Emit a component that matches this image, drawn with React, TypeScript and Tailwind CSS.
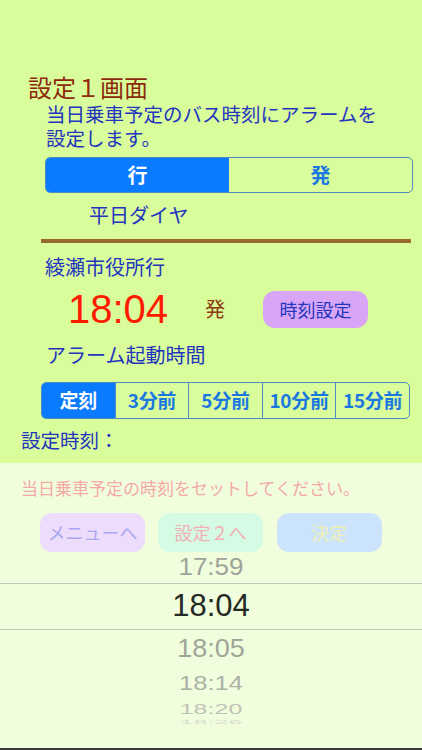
import React from 'react';

// 設定１画面 — alarm setup screen for a bus departure time.

const jp = "font-['Noto_Sans_CJK_JP',sans-serif]";
const num = "font-['Liberation_Sans','Noto_Sans_CJK_JP',sans-serif]";

const offsets = ['定刻', '3分前', '5分前', '10分前', '15分前'];

export default function App() {
  return (
    <div className={`flex h-[750px] w-[422px] flex-col overflow-hidden ${jp}`}>
      <div className="h-[463px] bg-[#dafd9b] pt-[71px]">
        <h1 className="ml-[28px] text-[24px] leading-[31px] text-[#8d2a0b]">設定１画面</h1>
        <p className={`ml-[46px] mt-[1px] flex flex-col text-[19.5px] leading-[24px] text-[#2435bd] ${num}`}>
          <span>当日乗車予定のバス時刻にアラームを</span>
          <span>設定します。</span>
        </p>

        <div className="ml-[45px] mt-[6px] flex h-[36px] w-[368px] overflow-hidden rounded-[5px] border border-[#4d8fc4]">
          <div className="flex flex-1 items-center justify-center bg-[#0a7aff] text-[20px] font-bold text-white">行</div>
          <div className="flex flex-1 items-center justify-center text-[20px] font-bold text-[#1c78e0]">発</div>
        </div>

        <p className="ml-[89px] mt-[10px] text-[20px] leading-[24px] text-[#2435bd]">平日ダイヤ</p>
        <div className="ml-[41px] mt-[12px] h-[4px] w-[370px] bg-[#9b6a30]" />

        <p className="ml-[45px] mt-[12px] text-[20px] leading-[24px] text-[#2435bd]">綾瀬市役所行</p>

        <div className="mt-[12px] flex h-[36px] items-center">
          <span className={`ml-[68px] w-[137px] text-[40px] leading-none text-[#ff1a00] ${num}`}>18:04</span>
          <span className="w-[58px] text-[20px] text-[#8b3a10]">発</span>
          <button className="flex h-[37px] w-[105px] items-center justify-center rounded-[12px] bg-[#d9a6f7] text-[18px] text-[#2435bd]">
            時刻設定
          </button>
        </div>

        <p className="ml-[46px] mt-[16px] text-[20px] leading-[24px] text-[#2435bd]">アラーム起動時間</p>

        <div className="ml-[41px] mt-[15px] flex h-[37px] w-[369px] overflow-hidden rounded-[5px] border border-[#4d8fc4]">
          {offsets.map((label, i) => (
            <div
              key={label}
              className={
                i === 0
                  ? 'flex flex-1 items-center justify-center bg-[#0a7aff] text-[19px] font-bold tracking-[-0.3px] text-white'
                  : 'flex flex-1 items-center justify-center border-l border-[#4d8fc4] text-[19px] font-bold tracking-[-0.3px] text-[#1c78e0]'
              }
            >
              {label}
            </div>
          ))}
        </div>

        <p className="ml-[21px] mt-[9px] text-[19.5px] leading-[24px] text-[#2435bd]">設定時刻：</p>
      </div>

      <div className="flex flex-1 flex-col bg-[#f1fedd]">
        <p className="ml-[21px] mt-[15px] text-[17px] leading-[20px] text-[#f4a9a9]">
          当日乗車予定の時刻をセットしてください。
        </p>

        <div className="ml-[40px] mt-[15px] flex gap-[13px]">
          <button className="flex h-[39px] w-[105px] items-center justify-center rounded-[12px] bg-[#eddcfb] text-[18px] text-[#aaa8f0]">
            メニューへ
          </button>
          <button className="flex h-[39px] w-[105px] items-center justify-center rounded-[12px] bg-[#d5fbe5] text-[18px] text-[#f2b0b6]">
            設定２へ
          </button>
          <button className="ml-[1px] flex h-[39px] w-[105px] items-center justify-center rounded-[12px] bg-[#cce3fd] text-[18px] text-[#eef0b2]">
            決定
          </button>
        </div>

        <div className={`flex flex-1 flex-col items-center ${num}`}>
          <div className="flex h-[31px] w-full items-center justify-center text-[26px] text-[#9ea399]">
            <span className="scale-y-[0.92]">17:59</span>
          </div>
          <div className="flex h-[47px] w-full items-center justify-center border-y border-[#c5c9bd] text-[31px] text-[#262a24]">
            18:04
          </div>
          <div className="flex h-[36px] w-full items-center justify-center text-[27px] text-[#a0a59a]">
            <span className="scale-y-[0.95]">18:05</span>
          </div>
          <div className="flex h-[34px] w-full items-center justify-center text-[25.5px] text-[#acb1a5]">
            <span className="scale-y-[0.8]">18:14</span>
          </div>
          <div className="flex h-[18px] w-full items-center justify-center text-[25px] leading-none text-[#bfc3b7]">
            <span className="scale-y-[0.55]">18:20</span>
          </div>
          <div className="flex h-[8px] w-full items-center justify-center overflow-hidden text-[25px] leading-none text-[#d9dcd0]">
            <span className="scale-y-[0.2]">18:26</span>
          </div>
          <div className="flex-1" />
          <div className="h-[2px] w-full bg-[#3a3a3a]" />
        </div>
      </div>
    </div>
  );
}
